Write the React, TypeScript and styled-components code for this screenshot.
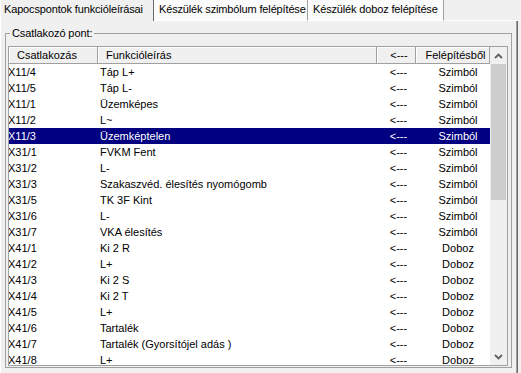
import React from "react";
import styled, { createGlobalStyle } from "styled-components";

interface pin {
  pin: string,
  desc: string,
  source: string
}

const pins: pin[] = [
  { pin: "X11/4", desc: "Táp L+", source: "Szimból" },
  { pin: "X11/5", desc: "Táp L-", source: "Szimból" },
  { pin: "X11/1", desc: "Üzemképes", source: "Szimból" },
  { pin: "X11/2", desc: "L~", source: "Szimból" },
  { pin: "X11/3", desc: "Üzemképtelen", source: "Szimból" },
  { pin: "X31/1", desc: "FVKM Fent", source: "Szimból" },
  { pin: "X31/2", desc: "L-", source: "Szimból" },
  { pin: "X31/3", desc: "Szakaszvéd. élesítés nyomógomb", source: "Szimból" },
  { pin: "X31/5", desc: "TK 3F Kint", source: "Szimból" },
  { pin: "X31/6", desc: "L-", source: "Szimból" },
  { pin: "X31/7", desc: "VKA élesítés", source: "Szimból" },
  { pin: "X41/1", desc: "Ki 2 R", source: "Doboz" },
  { pin: "X41/2", desc: "L+", source: "Doboz" },
  { pin: "X41/3", desc: "Ki 2 S", source: "Doboz" },
  { pin: "X41/4", desc: "Ki 2 T", source: "Doboz" },
  { pin: "X41/5", desc: "L+", source: "Doboz" },
  { pin: "X41/6", desc: "Tartalék", source: "Doboz" },
  { pin: "X41/7", desc: "Tartalék (Gyorsítójel adás )", source: "Doboz" },
  { pin: "X41/8", desc: "L+", source: "Doboz" },
]

const tabs = [
  { label: "Kapocspontok funkcióleírásai", width: 154 },
  { label: "Készülék szimbólum felépítése", width: 154 },
  { label: "Készülék doboz felépítése", width: 136 },
]

const SELECTED = 4

export default function App () {
  return (
    <Window>
      <GlobalStyle />
      <TabStrip>
        {tabs.map((t, i) => (
          <Tab key={t.label} active={i === 0} w={t.width}>{t.label}</Tab>
        ))}
        <TabFiller />
      </TabStrip>
      <Panel>
        <GroupBox>
          <GroupLabel>Csatlakozó pont:</GroupLabel>
          <ListView>
            <ListBody>
              <HeaderRow>
                <HeaderCell>Csatlakozás</HeaderCell>
                <HeaderCell>Funkcióleírás</HeaderCell>
                <HeaderCell center>&lt;---</HeaderCell>
                <HeaderCell center>Felépítésből</HeaderCell>
              </HeaderRow>
              {pins.map((p, i) => (
                <Row key={p.pin} selected={i === SELECTED}>
                  <PinCell>{p.pin}</PinCell>
                  <DescCell>{p.desc}</DescCell>
                  <ArrowCell>&lt;---</ArrowCell>
                  <SourceCell>{p.source}</SourceCell>
                </Row>
              ))}
            </ListBody>
            <ScrollBar>
              <ScrollButton>
                <svg width="9" height="6" viewBox="0 0 9 6">
                  <polyline points="1,5 4.5,1.5 8,5" fill="none" stroke="#606060" strokeWidth="1.8" />
                </svg>
              </ScrollButton>
              <Thumb />
              <Track />
              <ScrollButton>
                <svg width="9" height="6" viewBox="0 0 9 6">
                  <polyline points="1,1 4.5,4.5 8,1" fill="none" stroke="#606060" strokeWidth="1.8" />
                </svg>
              </ScrollButton>
            </ScrollBar>
          </ListView>
        </GroupBox>
      </Panel>
    </Window>
  )
}

const GlobalStyle = createGlobalStyle`
  html, body {
    margin: 0;
    padding: 0;
    background: #f0f0f0;
  }
  body {
    font-family: "Liberation Sans", Arial, sans-serif;
    font-size: 11px;
    color: #000;
  }
`

const Window = styled.div`
  width: 521px;
  height: 373px;
  overflow: hidden;
  background: #f0f0f0;
  display: flex;
  flex-direction: column;
`

const TabStrip = styled.div`
  display: flex;
  height: 21px;
  flex-shrink: 0;
`

const Tab = styled.div<{active : boolean, w : number}>`
  width: ${p => p.w}px;
  box-sizing: border-box;
  padding-left: ${p => p.active ? 3 : 5}px;
  line-height: 19px;
  white-space: nowrap;
  letter-spacing: -0.15px;
  background: ${p => p.active ? '#f0f0f0' : '#fbfbfb'};
  border-right: 1px solid ${p => p.active ? '#696969' : '#a0a0a0'};
  border-left: ${p => p.active ? '1px solid #fff' : 'none'};
  border-bottom: ${p => p.active ? 'none' : '1px solid #fff'};
`

const TabFiller = styled.div`
  flex: 1;
  border-bottom: 1px solid #fff;
`

const Panel = styled.div`
  width: 518px;
  flex: 1;
  box-sizing: border-box;
  padding: 6px 0 0 4px;
  border-left: 1px solid #fff;
  border-right: 1px solid #696969;
  box-shadow: inset -1px 0 0 #a0a0a0;
`

const GroupBox = styled.fieldset`
  margin: 0;
  width: 507px;
  box-sizing: border-box;
  padding: 0 2px 1px 2px;
  min-width: 0;
  border: 1px solid #a0a0a0;
`

const GroupLabel = styled.legend`
  margin-left: 2px;
  padding: 0 2px;
  line-height: 13px;
  letter-spacing: -0.1px;
`

const ListView = styled.div`
  margin-top: 6px;
  width: 500px;
  height: 320px;
  box-sizing: border-box;
  border: 1px solid #a0a0a0;
  background: #fff;
  display: flex;
`

const ListBody = styled.div`
  width: 481px;
  overflow: hidden;
  display: flex;
  flex-direction: column;
`

const columns = `89px 279px 39px 74px`

const HeaderRow = styled.div`
  display: grid;
  grid-template-columns: ${columns};
  height: 17px;
  flex-shrink: 0;
  background: #f0f0f0;
  border-bottom: 1px solid #a0a0a0;
  box-sizing: border-box;
`

const HeaderCell = styled.div<{center? : boolean}>`
  box-sizing: border-box;
  padding-left: ${p => p.center ? 6 : 8}px;
  text-align: ${p => p.center ? 'center' : 'left'};
  line-height: 17px;
  white-space: nowrap;
  overflow: hidden;
  border-right: 1px solid #a0a0a0;
  box-shadow: inset 1px 1px 0 #fff;
`

const Row = styled.div<{selected : boolean}>`
  display: grid;
  grid-template-columns: ${columns};
  height: 16px;
  flex-shrink: 0;
  line-height: 16px;
  white-space: nowrap;
  background: ${p => p.selected ? '#000080' : '#fff'};
  color: ${p => p.selected ? '#fff' : '#000'};
`

const Cell = styled.div`
  overflow: hidden;
`

const PinCell = styled(Cell)`
  text-indent: -1px;
`

const DescCell = styled(Cell)`
  padding-left: 2px;
`

const ArrowCell = styled(Cell)`
  padding-left: 4px;
  text-align: center;
`

const SourceCell = styled(Cell)`
  padding-left: 10px;
  text-align: center;
`

const ScrollBar = styled.div`
  width: 17px;
  display: flex;
  flex-direction: column;
  background: #f0f0f0;
`

const ScrollButton = styled.div`
  height: 17px;
  flex-shrink: 0;
  display: flex;
  align-items: center;
  justify-content: center;
`

const Thumb = styled.div`
  height: 136px;
  margin: 0 1px;
  background: #cdcdcd;
  flex-shrink: 0;
`

const Track = styled.div`
  flex: 1;
`
